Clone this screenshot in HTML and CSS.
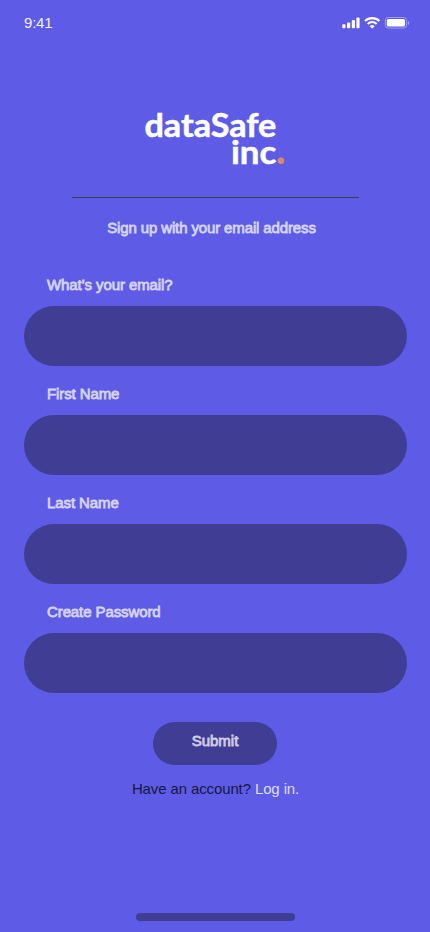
FILE: index.html
```html
<!DOCTYPE html>
<html lang="en">
<head>
<meta charset="utf-8">
<meta name="viewport" content="width=device-width, initial-scale=1">
<title>dataSafe inc. – Sign up</title>
<link rel="stylesheet" href="styles.css">
</head>
<body>
<main class="screen">
  <header class="status">
    <span class="time">9:41</span>
    <svg class="status-icons" width="68" height="14" viewBox="0 0 68 14" fill="#fff" aria-hidden="true">
      <rect x="0.3" y="8.3" width="3.2" height="3.9" rx="1"/>
      <rect x="5" y="6.4" width="3.2" height="5.8" rx="1"/>
      <rect x="9.8" y="4" width="3.2" height="8.2" rx="1"/>
      <rect x="14.4" y="1.5" width="3.2" height="10.7" rx="1"/>
      <g fill="none" stroke="#fff" stroke-width="2.1">
        <path d="M23 5.1a10.3 10.3 0 0 1 14.4 0"/>
        <path d="M25.7 7.9a6.4 6.4 0 0 1 9 0"/>
      </g>
      <path d="M30.2 12.6l-2.5-2.4a3.5 3.5 0 0 1 5 0z"/>
      <rect x="43.3" y="1.5" width="21.2" height="10.6" rx="2.8" fill="none" stroke="#fff" stroke-opacity=".4"/>
      <rect x="44.8" y="3" width="18.2" height="7.6" rx="1.5"/>
      <path d="M65.8 4.9v4c1-.4 1.4-1.1 1.4-2s-.5-1.6-1.4-2z" fill-opacity=".45"/>
    </svg>
  </header>

  <svg class="logo" width="144" height="72" viewBox="0 -6 144 72" role="img" aria-label="dataSafe inc.">
    <text x="1.4" y="29.2" textLength="132" lengthAdjust="spacingAndGlyphs">dataSafe</text>
    <text x="88" y="56" textLength="45.4" lengthAdjust="spacingAndGlyphs">inc</text>
    <circle class="logo-dot" cx="138" cy="52.8" r="3.2"/>
  </svg>

  <hr class="rule">
  <h1 class="title">Sign up with your email address</h1>

  <form class="form">
    <div class="field">
      <label for="email">What’s your email?</label>
      <input id="email" type="email">
    </div>
    <div class="field">
      <label for="first">First Name</label>
      <input id="first" type="text">
    </div>
    <div class="field">
      <label for="last">Last Name</label>
      <input id="last" type="text">
    </div>
    <div class="field">
      <label for="password">Create Password</label>
      <input id="password" type="password">
    </div>
    <button class="submit" type="button">Submit</button>
  </form>

  <p class="login">Have an account? <a href="#">Log in.</a></p>
  <div class="home-bar"></div>
</main>
</body>
</html>
```

FILE: styles.css
```css
* {
  box-sizing: border-box;
}

body {
  margin: 0;
  background: #5e5ce6;
  font-family: "Liberation Sans", Arial, sans-serif;
  font-size: 15px;
  line-height: 20px;
  color: #d5d3f4;
}

.screen {
  display: flex;
  flex-direction: column;
  align-items: center;
  width: 430px;
  height: 932px;
  padding: 13px 24px 11px;
}

.status {
  display: flex;
  justify-content: space-between;
  align-self: stretch;
  height: 20px;
  margin-right: -4px;
}

.time {
  color: #efeffd;
  letter-spacing: -0.2px;
}

.status-icons {
  margin-top: 3px;
}

.logo {
  margin-top: 69px;
  overflow: visible;
  fill: #fff;
  stroke: #fff;
  stroke-width: 0.5px;
  font-family: Lato, sans-serif;
  font-size: 32px;
  font-weight: 700;
}

.logo-dot {
  fill: #df8b60;
  stroke: none;
}

.rule {
  width: 287px;
  height: 1px;
  margin: 23px 0 0;
  border: 0;
  background: #3e3d50;
}

.title {
  margin: 20px 7px 0 0;
  font-size: 15px;
  font-weight: 400;
  letter-spacing: -0.13px;
}

.title,
.field label,
.submit {
  -webkit-text-stroke: 0.8px currentColor;
}

.form {
  display: flex;
  flex-direction: column;
  align-items: center;
  align-self: stretch;
  margin-top: 37px;
}

.field {
  display: flex;
  flex-direction: column;
  width: 383px;
  height: 109px;
}

.field label {
  margin: 0 0 11px 23.5px;
  letter-spacing: -0.1px;
}

.field input {
  height: 60px;
  padding: 0 23px;
  border: 0;
  border-radius: 30px;
  background: #3f3e94;
  color: inherit;
  font: inherit;
}

.submit {
  width: 124px;
  height: 43px;
  margin-top: 11px;
  padding: 0 0 5px;
  border: 0;
  border-radius: 22px;
  background: #3f3e94;
  color: #d0cee6;
  font: inherit;
}

.login {
  margin: 14px 0 0 1px;
  color: #18173f;
  letter-spacing: -0.12px;
}

.login a {
  color: #dedcf8;
  text-decoration: none;
}

.home-bar {
  width: 159px;
  height: 8px;
  margin-top: auto;
  border-radius: 4px;
  background: #3f3e94;
}
```
